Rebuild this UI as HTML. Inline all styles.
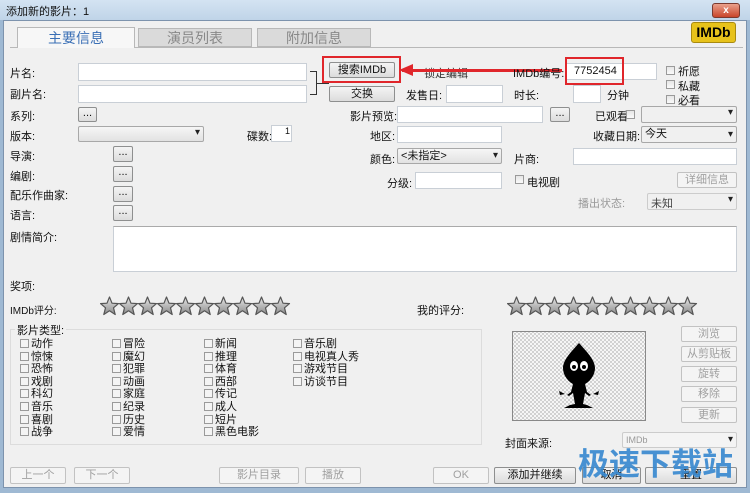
<!DOCTYPE html>
<html><head><meta charset="utf-8"><style>
*{margin:0;padding:0;box-sizing:border-box}
body{width:750px;height:493px;overflow:hidden;background:#9fb9d3;font-family:"Liberation Sans","Noto Sans CJK SC",sans-serif;font-size:11px;color:#111;position:relative}
.a{position:absolute;white-space:nowrap}
#win{position:absolute;left:3px;top:20px;width:744px;height:468px;background:#f0f0f0;border:1px solid #7d93ad}
.in{position:absolute;background:#fff;border:1px solid #c9cfd6}
.bt{position:absolute;border:1px solid #8e8f8f;border-radius:2px;background:linear-gradient(#f4f4f4,#dcdcdc);text-align:center;font-size:11px;line-height:14px}
.dis{color:#a0a0a0;border-color:#c2c2c2;background:#f4f4f4}
.cb{position:absolute;width:9px;height:9px;border:1px solid #9a9a9a;background:linear-gradient(#e6e6e6,#fafafa)}
.dd{position:absolute;background:#fff;border:1px solid #a8a8a8;border-radius:2px}
.dd:after{content:"▾";position:absolute;right:3px;top:0;font-size:10px;color:#222}
.g div{height:12.6px}
.g span{display:inline-block;width:9px;height:9px;border:1px solid #9a9a9a;background:#f4f4f4;margin-right:2px;vertical-align:-1px}
</style></head><body>
<div class="a" style="left:0;top:0;width:750px;height:20px;background:linear-gradient(#d4e3f2,#c0d4e8)"></div>
<div class="a" style="left:6px;top:3px;font-size:11px">添加新的影片：1</div>
<div class="a" style="left:712px;top:3px;width:28px;height:15px;background:linear-gradient(#e9a08c,#c9452b);border:1px solid #7a3a30;border-radius:3px;color:#fff;font-size:10px;text-align:center;line-height:13px;font-weight:bold">x</div>
<div id="win"></div>
<div class="a" style="left:10px;top:47px;width:733px;height:1px;background:#b8b8b8"></div>
<div class="a" style="left:17px;top:27px;width:118px;height:21px;background:#f7f7f7;border:1px solid #b8b8b8;border-bottom:none;text-align:center;font-size:14px;line-height:20px;color:#3a6fb5">主要信息</div>
<div class="a" style="left:138px;top:28px;width:114px;height:19px;background:#dadada;border:1px solid #b8b8b8;text-align:center;font-size:14px;line-height:18px;color:#888">演员列表</div>
<div class="a" style="left:257px;top:28px;width:114px;height:19px;background:#dadada;border:1px solid #b8b8b8;text-align:center;font-size:14px;line-height:18px;color:#888">附加信息</div>
<div class="a" style="left:691px;top:22px;width:45px;height:21px;background:#e7c21b;border:1px solid #a88a10;border-radius:3px;font-weight:bold;font-size:14px;text-align:center;line-height:19px;color:#000">IMDb</div>
<div class="a" style="left:10px;top:65px">片名:</div>
<div class="in" style="left:78px;top:63px;width:229px;height:18px"></div>
<div class="a" style="left:10px;top:86px">副片名:</div>
<div class="in" style="left:78px;top:85px;width:229px;height:18px"></div>
<div class="a" style="left:310px;top:71px;width:7px;height:24px;border:1px solid #333;border-left:none"></div>
<div class="a" style="left:317px;top:83px;width:12px;height:1px;background:#333"></div>
<div class="bt" style="left:329px;top:62px;width:66px;height:16px">搜索IMDb</div>
<div class="a" style="left:322px;top:56px;width:79px;height:27px;border:2px solid #e0262b"></div>
<div class="bt" style="left:329px;top:86px;width:66px;height:16px">交换</div>
<div class="a" style="left:424px;top:65px;color:#333">锁定编辑</div>
<div class="a" style="left:402px;top:69px;width:160px;height:3px;background:#e0262b"></div>
<div class="a" style="left:399px;top:64px;width:0;height:0;border-top:6px solid transparent;border-bottom:6px solid transparent;border-right:14px solid #e0262b"></div>
<div class="a" style="left:513px;top:65px">IMDb编号:</div>
<div class="in" style="left:566px;top:63px;width:91px;height:17px"></div>
<div class="a" style="left:574px;top:65px">7752454</div>
<div class="a" style="left:565px;top:57px;width:59px;height:28px;border:2px solid #e0262b"></div>
<div class="cb" style="left:666px;top:66px"></div><div class="a" style="left:678px;top:63px">祈愿</div>
<div class="cb" style="left:666px;top:80px"></div><div class="a" style="left:678px;top:78px">私藏</div>
<div class="cb" style="left:666px;top:95px"></div><div class="a" style="left:678px;top:92px">必看</div>
<div class="a" style="left:406px;top:87px">发售日:</div>
<div class="in" style="left:446px;top:85px;width:57px;height:18px"></div>
<div class="a" style="left:514px;top:87px">时长:</div>
<div class="in" style="left:573px;top:85px;width:28px;height:18px"></div>
<div class="a" style="left:607px;top:87px">分钟</div>
<div class="a" style="left:10px;top:108px">系列:</div>
<div class="bt" style="left:78px;top:107px;width:19px;height:15px;line-height:10px">...</div>
<div class="a" style="left:350px;top:108px">影片预览:</div>
<div class="in" style="left:397px;top:106px;width:146px;height:17px"></div>
<div class="bt" style="left:550px;top:107px;width:20px;height:15px;line-height:10px">...</div>
<div class="a" style="left:595px;top:108px">已观看</div><div class="cb" style="left:626px;top:110px"></div>
<div class="dd" style="left:641px;top:106px;width:96px;height:17px;background:#f0f0f0"></div>
<div class="a" style="left:10px;top:128px">版本:</div>
<div class="dd" style="left:78px;top:126px;width:126px;height:16px;background:linear-gradient(#f6f6f6,#e2e2e2)"></div>
<div class="a" style="left:247px;top:128px">碟数:</div>
<div class="in" style="left:271px;top:125px;width:21px;height:17px;font-size:9px;padding-left:13px">1</div>
<div class="a" style="left:370px;top:128px">地区:</div>
<div class="in" style="left:397px;top:126px;width:105px;height:17px"></div>
<div class="a" style="left:593px;top:128px">收藏日期:</div>
<div class="dd" style="left:641px;top:126px;width:96px;height:17px;background:#f0f0f0;padding-left:3px;line-height:15px">今天</div>
<div class="a" style="left:10px;top:148px">导演:</div>
<div class="bt" style="left:113px;top:146px;width:20px;height:16px;line-height:11px">...</div>
<div class="a" style="left:370px;top:151px">颜色:</div>
<div class="dd" style="left:397px;top:148px;width:105px;height:16px;background:linear-gradient(#f6f6f6,#e2e2e2);padding-left:3px;line-height:14px">&lt;未指定&gt;</div>
<div class="a" style="left:514px;top:151px">片商:</div>
<div class="in" style="left:573px;top:148px;width:164px;height:17px"></div>
<div class="a" style="left:10px;top:168px">编剧:</div>
<div class="bt" style="left:113px;top:166px;width:20px;height:16px;line-height:11px">...</div>
<div class="a" style="left:387px;top:175px">分级:</div>
<div class="in" style="left:415px;top:172px;width:87px;height:17px"></div>
<div class="cb" style="left:515px;top:175px"></div><div class="a" style="left:527px;top:174px">电视剧</div>
<div class="bt dis" style="left:677px;top:172px;width:60px;height:16px">详细信息</div>
<div class="a" style="left:10px;top:187px">配乐作曲家:</div>
<div class="bt" style="left:113px;top:186px;width:20px;height:16px;line-height:11px">...</div>
<div class="a" style="left:578px;top:195px;color:#999">播出状态:</div>
<div class="dd" style="left:647px;top:193px;width:90px;height:17px;background:#f0f0f0;border-color:#ccc"></div>
<div class="a" style="left:651px;top:195px;color:#444">未知</div>
<div class="a" style="left:10px;top:207px">语言:</div>
<div class="bt" style="left:113px;top:205px;width:20px;height:16px;line-height:11px">...</div>
<div class="a" style="left:10px;top:229px">剧情简介:</div>
<div class="in" style="left:113px;top:226px;width:624px;height:46px;border-top-color:#aaa"></div>
<div class="a" style="left:10px;top:278px">奖项:</div>
<div class="a" style="left:10px;top:302px;font-size:10px">IMDb评分:</div>
<svg class="a" style="left:100px;top:296px" width="192" height="22">
<defs><linearGradient id="sg" x1="0" y1="0" x2="0" y2="1"><stop offset="0" stop-color="#e8e8e8"/><stop offset="1" stop-color="#8a8a8a"/></linearGradient>
<polygon id="s" points="9.5,1 12,7.2 18.5,7.6 13.5,11.8 15.2,18.5 9.5,14.8 3.8,18.5 5.5,11.8 0.5,7.6 7,7.2" fill="url(#sg)" stroke="#555" stroke-width="1.2" stroke-linejoin="round"/></defs>
<use href="#s" x="0"/><use href="#s" x="19"/><use href="#s" x="38"/><use href="#s" x="57"/><use href="#s" x="76"/><use href="#s" x="95"/><use href="#s" x="114"/><use href="#s" x="133"/><use href="#s" x="152"/><use href="#s" x="171"/></svg>
<div class="a" style="left:417px;top:302px">我的评分:</div>
<svg class="a" style="left:507px;top:296px" width="192" height="22">
<use href="#s" x="0"/><use href="#s" x="19"/><use href="#s" x="38"/><use href="#s" x="57"/><use href="#s" x="76"/><use href="#s" x="95"/><use href="#s" x="114"/><use href="#s" x="133"/><use href="#s" x="152"/><use href="#s" x="171"/></svg>
<div class="a" style="left:10px;top:329px;width:472px;height:116px;border:1px solid #dcdcdc"></div>
<div class="a" style="left:15px;top:322px;background:#f0f0f0;padding:0 2px">影片类型:</div>
<div class="a g" style="left:20px;top:338px;line-height:12.6px">
<div style="position:absolute;left:0;width:90px">
<div><span></span>动作</div><div><span></span>惊悚</div><div><span></span>恐怖</div><div><span></span>戏剧</div><div><span></span>科幻</div><div><span></span>音乐</div><div><span></span>喜剧</div><div><span></span>战争</div></div>
<div style="position:absolute;left:92px;width:90px">
<div><span></span>冒险</div><div><span></span>魔幻</div><div><span></span>犯罪</div><div><span></span>动画</div><div><span></span>家庭</div><div><span></span>纪录</div><div><span></span>历史</div><div><span></span>爱情</div></div>
<div style="position:absolute;left:184px;width:90px">
<div><span></span>新闻</div><div><span></span>推理</div><div><span></span>体育</div><div><span></span>西部</div><div><span></span>传记</div><div><span></span>成人</div><div><span></span>短片</div><div><span></span>黑色电影</div></div>
<div style="position:absolute;left:273px;width:90px">
<div><span></span>音乐剧</div><div><span></span>电视真人秀</div><div><span></span>游戏节目</div><div><span></span>访谈节目</div></div>
</div>
<div class="a" style="left:512px;top:331px;width:134px;height:90px;border:1px solid #888;background:#fff">
<svg width="132" height="88" viewBox="0 0 132 88" style="position:absolute;left:0;top:0">
<defs><pattern id="h" width="4" height="4" patternUnits="userSpaceOnUse"><path d="M0 4L4 0M0 0L4 4" stroke="#c8c8c8" stroke-width="0.8"/></pattern></defs>
<rect width="132" height="88" fill="url(#h)"/>
<path d="M66 11 C58 20 50 28 50 36 C50 44 56 50 60 52 L58 60 L54 63 L56 64 L60 61 L62 72 L57 73 L51 76 L80 76 L74 73 L70 72 L72 61 L76 64 L78 63 L74 60 L72 52 C76 50 82 44 82 36 C82 28 74 20 66 11Z" fill="#000"/>
<ellipse cx="61" cy="34" rx="4" ry="5" fill="#fff"/><ellipse cx="71" cy="34" rx="4" ry="5" fill="#fff"/>
<circle cx="61" cy="35" r="2" fill="#000"/><circle cx="71" cy="35" r="2" fill="#000"/>
<path d="M52 62 l-6 -3 l1 4z M80 62 l6 -3 l-1 4z" fill="#000"/></svg></div>
<div class="bt dis" style="left:681px;top:326px;width:56px;height:16px">浏览</div>
<div class="bt dis" style="left:681px;top:346px;width:56px;height:16px">从剪贴板</div>
<div class="bt dis" style="left:681px;top:366px;width:56px;height:16px">旋转</div>
<div class="bt dis" style="left:681px;top:386px;width:56px;height:16px">移除</div>
<div class="bt dis" style="left:681px;top:407px;width:56px;height:16px">更新</div>
<div class="a" style="left:505px;top:435px">封面来源:</div>
<div class="dd" style="left:622px;top:432px;width:115px;height:16px;background:#f4f4f4;border-color:#ccc;font-size:9px;color:#999;padding-left:3px;line-height:14px">IMDb</div>
<div class="bt dis" style="left:10px;top:467px;width:56px;height:17px">上一个</div>
<div class="bt dis" style="left:74px;top:467px;width:56px;height:17px">下一个</div>
<div class="bt dis" style="left:219px;top:467px;width:80px;height:17px">影片目录</div>
<div class="bt dis" style="left:305px;top:467px;width:56px;height:17px">播放</div>
<div class="bt dis" style="left:433px;top:467px;width:56px;height:17px">OK</div>
<div class="bt" style="left:494px;top:467px;width:82px;height:17px">添加并继续</div>
<div class="bt" style="left:582px;top:467px;width:59px;height:17px">取消</div>
<div class="bt" style="left:645px;top:467px;width:92px;height:17px">重置</div>
<div class="a" style="left:578px;top:446px;font-size:31px;font-weight:bold;color:#3a8ad0;letter-spacing:0;line-height:38px;opacity:.92">极速下载站</div>
</body></html>
